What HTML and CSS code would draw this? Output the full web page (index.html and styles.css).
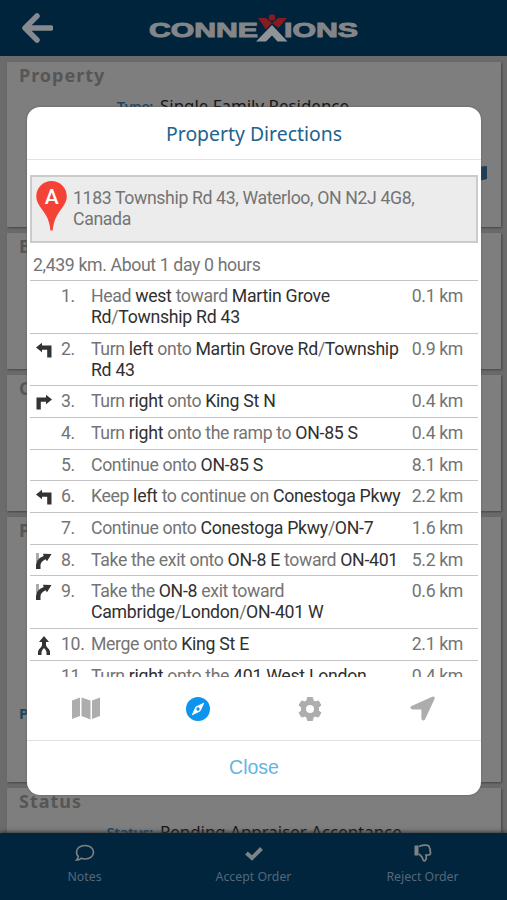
FILE: index.html
```html
<!DOCTYPE html>
<html lang="en">
<head>
<meta charset="utf-8">
<title>Property Directions</title>
<link rel="stylesheet" href="styles.css">
</head>
<body>
<div class="app">
  <header class="topbar">
    <svg class="back" viewBox="0 0 32 30"><path d="M16 3 4 15l12 12M5 15h25" fill="none" stroke="currentColor" stroke-width="5.500" stroke-linecap="round" stroke-linejoin="round"/></svg>
    <svg class="logo" viewBox="0 0 210 30">
      <g class="logo-text">
        <text x="0" y="23.500" textLength="109" lengthAdjust="spacingAndGlyphs">CONNE</text>
        <text x="135" y="23.500" textLength="74" lengthAdjust="spacingAndGlyphs">IONS</text>
      </g>
      <path class="logo-legs" d="M123 12l15.500 16.500h-10l-5.500-6-6 6h-10z"/>
      <path class="logo-arms" d="M109 5h8l6 5 6-5h9l-8.500 10-6.500-5-6 6.500z"/>
      <circle class="logo-arms" cx="123" cy="4.500" r="3.200"/>
    </svg>
  </header>
  <main class="cards">
    <section class="card card-property"><h2>Property</h2>
      <div class="field"><b>Type:</b><span>Single Family Residence</span></div>
      <svg class="map-link" viewBox="0 0 12 16"><path d="M0 1 12 0v13L0 16z" fill="currentColor"/></svg>
    </section>
    <section class="card card-b"><h2>B</h2></section>
    <section class="card card-c"><h2>C</h2></section>
    <section class="card card-p"><h2>P</h2><b class="edge-label">P</b></section>
    <section class="card card-status"><h2>Status</h2>
      <div class="field"><b>Status:</b><span>Pending Appraiser Acceptance</span></div>
    </section>
  </main>
  <nav class="bottombar">
    <div class="action">
      <svg viewBox="0 0 20 18"><path d="M10 1.500c4.900 0 8.500 2.900 8.500 6.700s-3.600 6.800-8.500 6.800c-1.400 0-2.700-.2-3.800-.7-1.300 1-2.900 1.700-4.700 1.700 1-1 1.700-2.200 1.800-3.400C2.100 11.300 1.500 9.900 1.500 8.200c0-3.800 3.600-6.700 8.500-6.700z" fill="none" stroke="currentColor" stroke-width="1.600"/></svg>
      <span>Notes</span>
    </div>
    <div class="action">
      <svg viewBox="0 0 20 18"><path d="M2.500 9 8 14 17.500 4.500" fill="none" stroke="currentColor" stroke-width="4"/></svg>
      <span>Accept Order</span>
    </div>
    <div class="action">
      <svg viewBox="0 0 20 18"><path d="M1.500 1.500h4v10h-4z" fill="currentColor"/><path d="M6 2.500c3-1.300 6-1.500 8.500-1.200 1.600.2 2 1.500 1.800 2.500 1 .8 1.200 1.900.7 2.900 1 1.500.6 4.300-1.500 4.300h-2.700c.8 2 .8 5.500-1.500 5.800-1.700.2-1.400-2.400-2.300-3.700L6 9.700" fill="none" stroke="currentColor" stroke-width="1.700" stroke-linejoin="round"/></svg>
      <span>Reject Order</span>
    </div>
  </nav>
</div>
<div class="overlay">
  <div class="modal">
    <h1>Property Directions</h1>
    <div class="directions">
      <div class="address">
        <svg class="pin" viewBox="0 0 31 50"><path d="M15.500 0C24 0 30.800 6.800 30.800 15.200c0 7.600-5.300 11.200-9.800 19.300-2.600 4.700-4 10-4.300 15h-2.300c-.3-5-1.700-10.300-4.300-15C5.500 26.400.3 22.800.3 15.200.3 6.800 7 0 15.500 0z" fill="#f44336"/><text x="15.500" y="22.500" text-anchor="middle">A</text></svg>
        <p>1183 Township Rd 43, Waterloo, ON N2J 4G8, Canada</p>
      </div>
      <p class="summary">2,439 km. About 1 day 0 hours</p>
      <ol class="steps">
        <li><i></i><span>1.</span><p>Head <b>west</b> toward <b>Martin Grove Rd</b>/<b>Township Rd 43</b></p><em>0.1 km</em></li>
        <li><i><svg viewBox="0 0 16 16"><use href="#left"/></svg></i><span>2.</span><p>Turn <b>left</b> onto <b>Martin Grove Rd</b>/<b>Township Rd 43</b></p><em>0.9 km</em></li>
        <li><i><svg viewBox="0 0 16 16"><use href="#right"/></svg></i><span>3.</span><p>Turn <b>right</b> onto <b>King St N</b></p><em>0.4 km</em></li>
        <li><i></i><span>4.</span><p>Turn <b>right</b> onto the ramp to <b>ON-85 S</b></p><em>0.4 km</em></li>
        <li><i></i><span>5.</span><p>Continue onto <b>ON-85 S</b></p><em>8.1 km</em></li>
        <li><i><svg viewBox="0 0 16 16"><use href="#left"/></svg></i><span>6.</span><p>Keep <b>left</b> to continue on <b>Conestoga Pkwy</b></p><em>2.2 km</em></li>
        <li><i></i><span>7.</span><p>Continue onto <b>Conestoga Pkwy</b>/<b>ON-7</b></p><em>1.6 km</em></li>
        <li><i><svg viewBox="0 0 16 16"><use href="#ramp"/></svg></i><span>8.</span><p>Take the exit onto <b>ON-8 E</b> toward <b>ON-401</b></p><em>5.2 km</em></li>
        <li><i><svg viewBox="0 0 16 16"><use href="#ramp"/></svg></i><span>9.</span><p>Take the <b>ON-8</b> exit toward <b>Cambridge</b>/<b>London</b>/<b>ON-401 W</b></p><em>0.6 km</em></li>
        <li><i><svg class="merge" viewBox="0 0 16 19"><use href="#merge"/></svg></i><span>10.</span><p>Merge onto <b>King St E</b></p><em>2.1 km</em></li>
        <li><i></i><span>11.</span><p>Turn <b>right</b> onto the <b>401 West London</b></p><em>0.4 km</em></li>
      </ol>
    </div>
    <div class="tabs">
      <div><svg width="28" height="23" viewBox="0 0 28 23"><path d="M0 3.500 8 .5v18.500L0 22zM9.500.5l9 3v19l-9-3.500zM20 3.500 28 .5v18.500L20 22z" fill="#adadad"/></svg></div>
      <div><svg width="24" height="24" viewBox="0 0 24 24"><circle cx="12" cy="12" r="12" fill="#0d94ee"/><path d="M17.700 6.300 14 14 6.300 17.700 10 10z" fill="#fff" stroke="#fff" stroke-linejoin="round"/><circle cx="12" cy="12" r="1.700" fill="#0d94ee"/></svg></div>
      <div><svg width="24" height="24" viewBox="0 0 24 24"><path d="M9.500.5h5l.7 3.200 2 1.200 3.200-1 2.500 4.300-2.400 2.200v3.200l2.400 2.200-2.500 4.300-3.200-1-2 1.200-.7 3.200h-5l-.7-3.200-2-1.200-3.200 1-2.500-4.300 2.400-2.200v-3.200L1.100 8.200l2.500-4.300 3.200 1 2-1.200z" fill="#adadad" stroke="#adadad" stroke-linejoin="round"/><circle cx="12" cy="12" r="4" fill="#fff"/></svg></div>
      <div><svg width="25" height="25" viewBox="0 0 25 25"><path d="M22.500 1.500 2 10.800c-1 .6-.7 1.700.5 1.700h9.800v10c0 1.200 1.500 1.500 2 .3l9.400-20.300c.4-.8-.4-1.400-1.200-1z" fill="#adadad" stroke="#adadad" stroke-width="1.800" stroke-linejoin="round"/></svg></div>
    </div>
    <button class="close">Close</button>
  </div>
</div>
<svg class="symbols">
  <symbol id="left" viewBox="0 0 16 16"><path d="M0 5.500 6 .8v2.700h9.500v12h-4.300V7.700H6v2.500z" fill="#333"/></symbol>
  <symbol id="right" viewBox="0 0 16 16"><path d="M16 5.500 10 .8v2.700H.5v12h4.300V7.700H10v2.500z" fill="#333"/></symbol>
  <symbol id="ramp" viewBox="0 0 16 16"><path d="M0 0h3v9H0z" fill="#aaa"/><path d="M0 16v-4C.5 7.500 3.500 4.500 7.700 3L7 .8 15.500 1 11 8.300 9.500 6.300C6.500 7.700 4.800 9.500 4.500 12v4z" fill="#333"/></symbol>
  <symbol id="merge" viewBox="0 0 16 19"><path d="M8 0l5 6h-3v3c0 2.200 4 4 4 7v3h-3.500v-2.500C10.500 14.500 9 13.500 8 12c-1 1.500-2.500 2.500-2.500 4.500V19H2v-3c0-3 4-4.800 4-7V6H3z" fill="#333"/></symbol>
</svg>
</body>
</html>
```
FILE: styles.css
```css
* { box-sizing: border-box; }
body { margin: 0; width: 507px; height: 900px; overflow: hidden; position: relative; font-family: "Noto Sans", sans-serif; }
h1, h2, p, ol { margin: 0; padding: 0; font-weight: normal; }
.symbols { position: absolute; width: 0; height: 0; }

.app { height: 900px; display: flex; flex-direction: column; background: #6b6b6b; }
.topbar { flex: none; height: 56px; background: #00243b; display: flex; align-items: center; padding-left: 21px; color: #848a90; }
.back { width: 32px; height: 30px; }
.logo { width: 210px; height: 30px; margin-left: 96px; overflow: visible; }
.logo-text { font: bold 20.500px "Liberation Sans", sans-serif; fill: #838589; stroke: #838589; stroke-width: 1px; }
.logo-legs { fill: #909398; }
.logo-arms { fill: #841c22; }

.cards { flex: 1; min-height: 0; overflow: hidden; padding: 6px 6px 0 7px; display: flex; flex-direction: column; gap: 6px; }
.card { position: relative; flex: none; background: #7e7e7e; box-shadow: 1px 1px 2px #444; padding: 0 12px; }
.card h2 { font-size: 18px; line-height: 26px; font-weight: bold; letter-spacing: 1px; color: #565656; }
.card-property { height: 165px; }
.card-b, .card-c { height: 136px; }
.card-p { height: 265px; }
.card-status { height: 60px; }
.field { display: grid; grid-template-columns: 134px 1fr; column-gap: 7px; font-size: 16.900px; line-height: 24px; margin-top: 6px; color: #161616; }
.field b { font-family: "Open Sans", sans-serif; font-size: 15px; font-weight: 600; letter-spacing: -.45px; text-align: right; color: #1b4560; }
.map-link { position: absolute; right: 14px; top: 104px; width: 12px; height: 16px; color: #1f3d54; }
.edge-label { display: block; margin-top: 158px; font-size: 15px; line-height: 24px; color: #1b4560; }

.bottombar { flex: none; position: relative; height: 67px; background: #00253d; box-shadow: 0 -1px 4px #333; display: grid; grid-template-columns: repeat(3, 1fr); color: #7f8285; }
.action { display: flex; flex-direction: column; align-items: center; padding-top: 11px; }
.action svg { width: 20px; height: 18px; }
.action span { font-size: 12.300px; line-height: 18px; margin-top: 6px; color: #55687a; }

.overlay { position: absolute; inset: 0; padding: 107px 26px 105px 27px; }
.modal { height: 688px; background: #fff; border-radius: 13px; overflow: hidden; display: flex; flex-direction: column; box-shadow: 0 0 2px #555; }
.modal h1 { flex: none; height: 53px; border-bottom: 1px solid #e2e2e2; text-align: center; font-size: 19.400px; line-height: 53px; color: #22638f; }
.directions { flex: none; height: 517px; margin: 0 3px; padding-top: 15px; overflow: hidden; font: 300 17.700px/20.700px Roboto, sans-serif; letter-spacing: -.37px; color: #747474; }
.address { height: 68px; border: 2px solid #cbcbcb; background: #ececec; display: flex; padding: 4px 40px 0 4px; }
.pin { flex: none; width: 31px; height: 50px; }
.pin text { font: 500 21px Roboto, sans-serif; fill: #fff; }
.address p { margin: 7px 0 0 6px; }
.summary { height: 37.400px; padding: 12px 0 0 3px; }
.steps { list-style: none; }
.steps li { display: grid; grid-template-columns: 31px 30px 311px 1fr; border-top: 1px solid #c4c4c4; padding: 5px 15px 5px 0; }
.steps i { padding: 3px 0 0 6px; line-height: 0; }
.steps svg { width: 16px; height: 16px; }
.steps .merge { height: 19px; margin-top: -1px; }
.steps b { font-weight: 400; letter-spacing: -.28px; color: #303030; }
.steps em { font-style: normal; text-align: right; white-space: nowrap; }
.tabs { flex: none; height: 64px; border-bottom: 1px solid #e0e0e0; padding: 0 3px; display: grid; grid-template-columns: repeat(4, 1fr); justify-items: center; align-items: center; }
.tabs svg { display: block; }
.close { flex: 1; border: 0; background: none; padding: 0 0 1px; font: 19.500px "Liberation Sans", sans-serif; color: #65b5df; }
```
